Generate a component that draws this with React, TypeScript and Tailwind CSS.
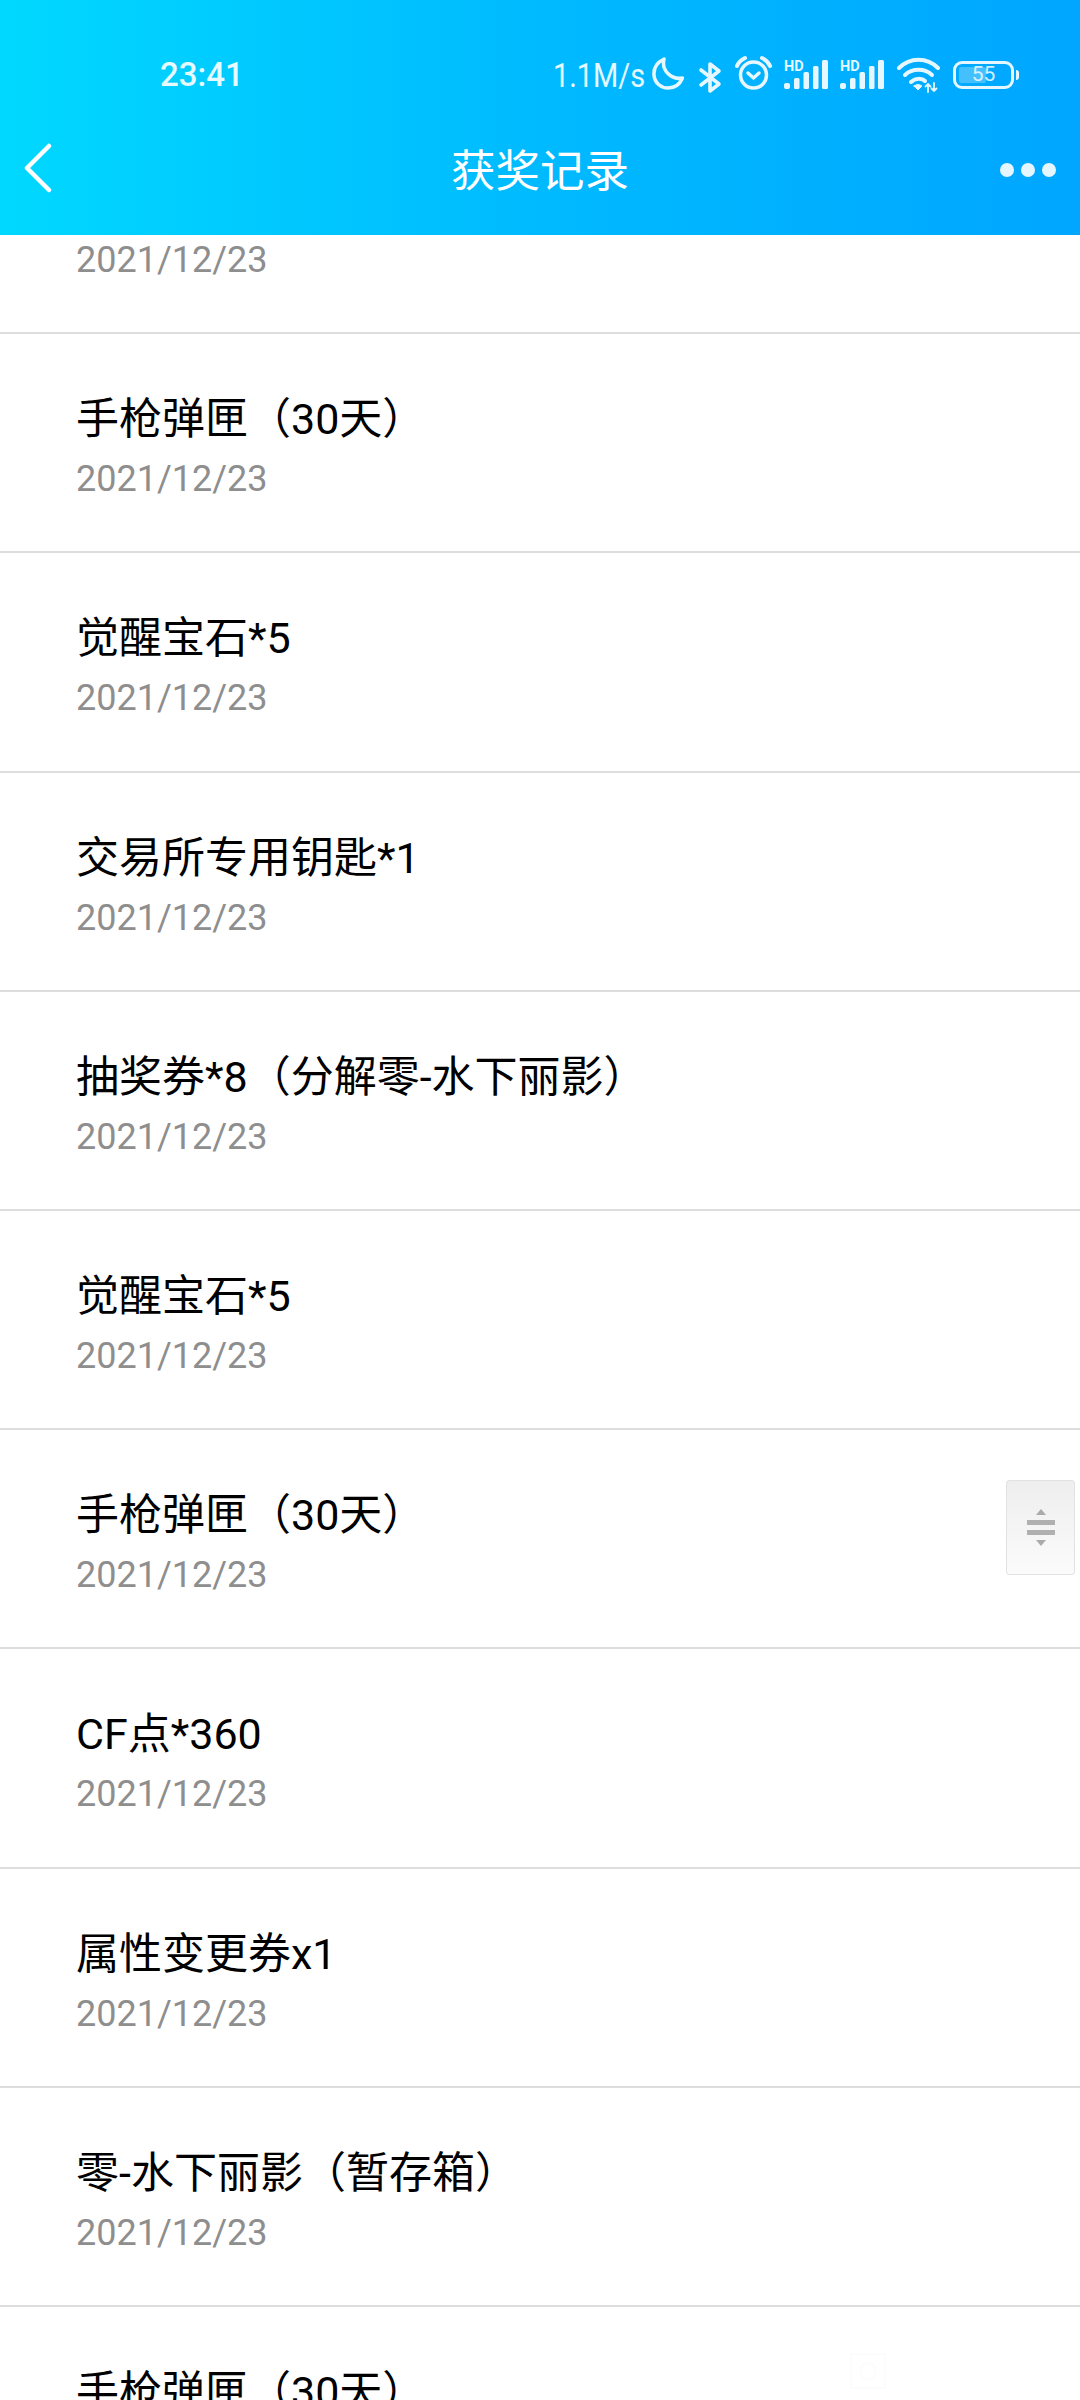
import React from 'react';

const records = [
  { title: '', date: '2021/12/23' },
  { title: '手枪弹匣（30天）', date: '2021/12/23' },
  { title: '觉醒宝石*5', date: '2021/12/23' },
  { title: '交易所专用钥匙*1', date: '2021/12/23' },
  { title: '抽奖券*8（分解零-水下丽影）', date: '2021/12/23' },
  { title: '觉醒宝石*5', date: '2021/12/23' },
  { title: '手枪弹匣（30天）', date: '2021/12/23' },
  { title: 'CF点*360', date: '2021/12/23' },
  { title: '属性变更券x1', date: '2021/12/23' },
  { title: '零-水下丽影（暂存箱）', date: '2021/12/23' },
  { title: '手枪弹匣（30天）', date: '2021/12/23' },
];

const Signal = ({ className }: { className?: string }) => (
  <svg width="44" height="40" viewBox="0 0 44 40" fill="white" className={className}>
    <text x="0" y="16" fontSize="14.5" fontWeight="700" fontFamily="Roboto, sans-serif">HD</text>
    <rect x="0" y="28" width="6" height="6" rx="2" />
    <rect x="10" y="23" width="5.5" height="11" rx="1.5" />
    <rect x="19.5" y="17" width="5.5" height="17" rx="1.5" />
    <rect x="29" y="11" width="5.5" height="23" rx="1.5" />
    <rect x="38" y="5" width="6" height="29" rx="1.5" />
  </svg>
);

const StatusBar = () => (
  <div className="flex h-[120px] items-start pt-[55px] pl-[160px] text-white/90">
    <span className="w-[393px] text-[33px] leading-[40px] font-medium font-['Roboto',sans-serif]">23:41</span>
    <span className="w-[99px] origin-left scale-x-85 text-[34px] leading-[40px] font-['Roboto',sans-serif]">1.1M/s</span>
    <div className="flex items-center opacity-90">
      <svg width="32" height="40" viewBox="0 0 32 40" fill="none" stroke="white" strokeWidth="3.5" strokeLinejoin="round">
        <path d="M12 4 C4 8 1.5 14 2 20 C2.5 28 9 33 16 33 C23 33 28 29 30.5 23 C21 25 9 17 12 4 Z" />
      </svg>
      <svg width="24" height="40" viewBox="0 0 24 40" fill="none" stroke="white" strokeWidth="3.6" strokeLinejoin="round" strokeLinecap="round" className="ml-[14px]">
        <path d="M3 15 L21 29 L12 36 L12 9 L21 16 L3 30" />
      </svg>
      <svg width="37" height="40" viewBox="0 0 37 40" fill="none" stroke="white" strokeWidth="3.5" strokeLinecap="round" className="ml-[13px]">
        <circle cx="18.5" cy="20" r="13" />
        <path d="M13 18 L18.5 23 L24 18" />
        <path d="M2 11 Q4 6 10 3" strokeWidth="4" />
        <path d="M35 11 Q33 6 27 3" strokeWidth="4" />
      </svg>
      <Signal className="ml-[12px]" />
      <Signal className="ml-[12px]" />
      <svg width="43" height="40" viewBox="0 0 43 40" fill="none" stroke="white" strokeWidth="4" strokeLinecap="round" className="ml-[13px]">
        <path d="M2 13 C13 2 30 2 41 13" />
        <path d="M8 20 C15 13 28 13 35 20" />
        <path d="M14 27 C18 23 25 23 28 26" />
        <path d="M17 31 L21 35 L25 31 Q21 28 17 31 Z" fill="white" strokeWidth="1" />
        <path d="M31 37 L31 29 M28.5 31.5 L31 29 L33.5 31.5 M37 28 L37 36 M34.5 33.5 L37 36 L39.5 33.5" strokeWidth="1.8" />
      </svg>
      <div className="ml-[13px] flex items-center">
        <div className="h-[28px] w-[61px] rounded-[9px] border-[3.5px] border-white p-[3px]">
          <div className="relative h-full w-full">
            <div className="h-full w-[55%] rounded-[2px] bg-white/30" />
            <span className="absolute inset-0 text-center text-[21px] leading-[15px] font-['Roboto',sans-serif]">55</span>
          </div>
        </div>
        <div className="ml-[2px] h-[10px] w-[3px] rounded-r bg-white" />
      </div>
    </div>
  </div>
);

const NavBar = () => (
  <div className="flex h-[115px] items-start justify-between px-[24px] pt-[20px]">
    <div className="w-[60px] pt-[3px]">
      <svg width="28" height="50" viewBox="0 0 28 50" fill="none" stroke="white" strokeWidth="4.5" strokeLinecap="round" strokeLinejoin="round">
        <path d="M25 3 L3 25 L25 47" />
      </svg>
    </div>
    <h1 className="text-[44.5px] leading-[56px] font-normal text-white font-['Noto_Sans_CJK_SC',sans-serif]">获奖记录</h1>
    <div className="flex w-[60px] justify-end gap-[7px] pt-[23px]">
      <span className="h-[14px] w-[14px] rounded-full bg-white/90" />
      <span className="h-[14px] w-[14px] rounded-full bg-white/90" />
      <span className="h-[14px] w-[14px] rounded-full bg-white/90" />
    </div>
  </div>
);

const RecordRow = ({ title, date }: { title: string; date: string }) => (
  <div className="flex h-[219.2px] flex-col border-b-2 border-[#dddddd] pl-[76px] pt-[54px]">
    <div className="h-[62px] text-[43px] leading-[62px] text-black font-['Roboto','Noto_Sans_CJK_SC',sans-serif]">{title}</div>
    <div className="mt-[5px] text-[36px] leading-[48px] text-[#8e8e8e] font-['Roboto',sans-serif]">{date}</div>
  </div>
);

export default function App() {
  return (
    <div className="relative flex h-[2400px] w-[1080px] flex-col overflow-hidden bg-white">
      <header className="relative z-10 h-[235px] bg-gradient-to-r from-[#00d8ff] via-[#00baff] to-[#00a6ff]">
        <StatusBar />
        <NavBar />
      </header>
      <main className="flex-1 overflow-hidden">
        {/* list is scrolled, first row sits partly under the header */}
        <div className="-mt-[120px]">
          {records.map((r, i) => (
            <RecordRow key={i} title={r.title} date={r.date} />
          ))}
        </div>
      </main>
      <div className="absolute left-[1006px] top-[1480px] flex h-[95px] w-[69px] flex-col items-center justify-center gap-[5px] rounded-[3px] border border-[#e2e2e2] bg-gradient-to-b from-[#eeeeee] to-[#fbfbfb]">
        <div className="h-0 w-0 border-x-[5px] border-b-[6px] border-x-transparent border-b-[#aaaaaa]" />
        <div className="h-[5px] w-[28px] bg-[#b0b0b0]" />
        <div className="h-[5px] w-[28px] bg-[#b0b0b0]" />
        <div className="h-0 w-0 border-x-[5px] border-t-[6px] border-x-transparent border-t-[#aaaaaa]" />
      </div>
      {/* faint watermark near the bottom */}
      <svg width="36" height="36" viewBox="0 0 36 36" fill="none" stroke="#fcfcfc" strokeWidth="2" className="absolute left-[850px] top-[2353px]">
        <rect x="1" y="1" width="34" height="34" />
        <circle cx="18" cy="18" r="8" />
      </svg>
    </div>
  );
}
